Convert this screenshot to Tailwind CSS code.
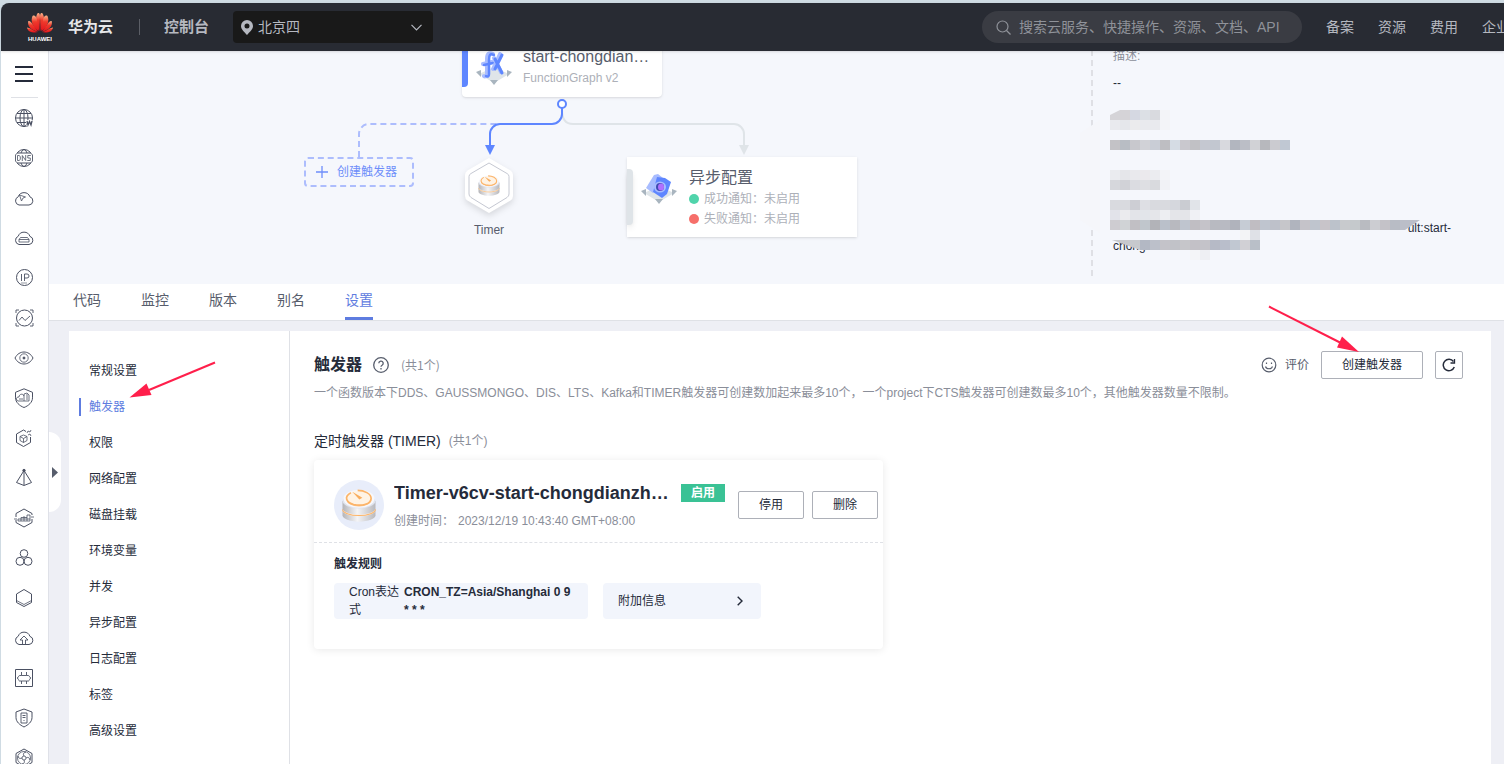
<!DOCTYPE html>
<html lang="zh-CN">
<head>
<meta charset="utf-8">
<title>函数工作流 - 触发器</title>
<script src="https://cdn.jsdelivr.net/npm/@tailwindcss/browser@4"></script>
</head>
<body class="flex h-screen flex-col overflow-hidden bg-[#cfdbe3] pt-[3px] pl-px font-['Liberation_Sans','Noto_Sans_CJK_SC',sans-serif] text-xs text-[#252b3a]">

<svg class="absolute h-0 w-0" aria-hidden="true">
  <defs>
    <linearGradient id="metal" x1="0" x2="1"><stop offset="0" stop-color="#b4b4b8"/><stop offset=".45" stop-color="#f4f4f6"/><stop offset="1" stop-color="#b9b9bd"/></linearGradient>
    <linearGradient id="petal" x1="0" y1="0" x2="0" y2="1"><stop offset="0" stop-color="#fbb48b"/><stop offset=".4" stop-color="#ee3a2c"/><stop offset="1" stop-color="#e3131c"/></linearGradient>
    <symbol id="timer" viewBox="0 0 100 98">
      <path d="M1 62v16c0 10 22 19 49 19s49-9 49-19V62z" fill="url(#metal)"/>
      <ellipse cx="50" cy="62" rx="49" ry="19" fill="#f6efe8"/>
      <path d="M1 60c0 10 22 19 49 19s49-9 49-19" fill="none" stroke="#fcb468" stroke-width="3"/>
      <path d="M1 36v21c0 10 22 19 49 19s49-9 49-19V36z" fill="url(#metal)"/>
      <ellipse cx="50" cy="36" rx="49" ry="22" fill="#dfe3ee"/>
      <ellipse cx="50" cy="29" rx="46" ry="27" fill="#f7f8fc"/>
      <ellipse cx="50" cy="31" rx="37" ry="21" fill="#fcc084"/>
      <ellipse cx="50" cy="27" rx="37" ry="21" fill="#fff3e4"/>
      <path d="M26 11C4 23 12 40 34 46c26 6 51-2 52-18C86 14 66 4 46 4" fill="none" stroke="#fcb468" stroke-width="5"/>
      <path d="M30 8l30 18-9 5z" fill="#f9ad5e"/>
    </symbol>
    <symbol id="base" viewBox="0 0 40 20">
      <path d="M20 1l15 7-15 9L5 8z" fill="#dfe5e9"/>
      <path d="M2 6l5-2v7z M38 6l-5-2v7z M16 14h8l-4 5z" fill="#a9b5bf"/>
    </symbol>
  </defs>
</svg>

<header class="z-20 flex h-12 shrink-0 items-center rounded-tl-lg bg-[#282b33] pl-[25px] text-[#b5b8c0] shadow-sm">
  <a href="#" class="flex items-center gap-[14px]">
    <svg class="h-[30px] w-7" viewBox="0 0 28 30" aria-label="HUAWEI" role="img">
      <g fill="url(#petal)">
        <path d="M13.400 19C9 14 9 4 11.800 1c1.600-.6 2.200 1 2.200 4z"/>
        <path d="M14.600 19C19 14 19 4 16.200 1c-1.600-.6-2.200 1-2.200 4z"/>
        <path d="M12.600 19.300C6 15 4.500 8 6.500 4c2-1.500 4 1 4.500 4z"/>
        <path d="M15.400 19.300C22 15 23.500 8 21.500 4c-2-1.500-4 1-4.500 4z"/>
        <path d="M11.900 19.800C5 18 1 14 2.300 9c1.500-.5 3 1 4.500 3.500z"/>
        <path d="M16.100 19.800C23 18 27 14 25.700 9c-1.500-.5-3 1-4.500 3.500z"/>
        <path d="M11.500 20.300C5 21 1.500 19 1 15.400c2 .3 6.500 2.600 10.500 4.900z"/>
        <path d="M16.500 20.300C23 21 26.500 19 27 15.400c-2 .3-6.500 2.600-10.500 4.900z"/>
      </g>
      <text x="14" y="29" text-anchor="middle" font-family="Liberation Sans" font-weight="700" font-size="6" fill="#fff">HUAWEI</text>
    </svg>
    <span class="text-[15px] font-bold text-[#e6e7ea]">华为云</span>
  </a>
  <span class="ml-[26px] h-4 w-px bg-[#5b5e66]"></span>
  <a href="#" class="ml-6 text-[15px] font-bold">控制台</a>
  <div class="relative ml-6 h-8 w-[200px]">
    <select aria-label="区域" class="h-8 w-full appearance-none rounded bg-[#191919] pl-[25px] text-sm text-[#b5b8c0]"><option>北京四</option></select>
    <svg class="pointer-events-none absolute top-[9px] left-2 h-[15px] w-3" viewBox="0 0 12 15"><path fill="#b5b8c0" fill-rule="evenodd" d="M6 0a6 6 0 0 1 6 6c0 3.500-3.500 6-6 9-2.500-3-6-5.500-6-9a6 6 0 0 1 6-6zm0 3.500a2.500 2.500 0 1 0 0 5 2.500 2.500 0 0 0 0-5z"/></svg>
    <svg class="pointer-events-none absolute top-[13px] right-[11px] h-[7px] w-[11px]" viewBox="0 0 11 7" fill="none" stroke="#b5b8c0" stroke-width="1.200"><path d="M.5.800l5 5 5-5"/></svg>
  </div>
  <div class="flex-1"></div>
  <label class="flex h-8 w-80 shrink-0 items-center gap-2 rounded-full bg-[#3a3c43] pl-[14px]">
    <svg class="h-[15px] w-[15px]" viewBox="0 0 15 15" fill="none" stroke="#8f9299" stroke-width="1.200"><circle cx="6.500" cy="6.500" r="5.500"/><path d="M10.500 10.500l4 4"/></svg>
    <input type="search" aria-label="搜索" placeholder="搜索云服务、快捷操作、资源、文档、API" class="min-w-0 flex-1 bg-transparent text-sm placeholder:text-[#8f9299] focus:outline-none">
  </label>
  <nav class="ml-6 flex w-[178px] shrink-0 gap-6 overflow-hidden text-sm whitespace-nowrap">
    <a href="#">备案</a><a href="#">资源</a><a href="#">费用</a><a href="#">企业</a>
  </nav>
</header>

<div class="flex min-h-0 flex-1">
  <nav class="flex w-12 shrink-0 flex-col items-center overflow-hidden border-r border-[#dfe1e8] bg-white pr-px" aria-label="服务列表">
    <button aria-label="菜单" class="flex h-[46px] w-full shrink-0 items-center justify-center"><svg class="h-4 w-[18px]" viewBox="0 0 18 16" fill="#252b3a"><path d="M0 0h18v2H0zM0 7h18v2H0zM0 14h18v2H0z"/></svg></button>
    <div class="h-px w-[27px] shrink-0 bg-[#dfe1e6]"></div>
    <div class="flex shrink-0 flex-col text-[#4a5062] [&_a]:flex [&_a]:h-10 [&_a]:items-center [&_a]:justify-center [&_svg]:h-5 [&_svg]:w-5 [&_svg]:fill-none [&_svg]:stroke-current">
      <a href="#" aria-label="Web"><svg viewBox="0 0 20 20"><circle cx="10" cy="10" r="8.500"/><ellipse cx="10" cy="10" rx="4" ry="8.500"/><path d="M10 1.500v17M1.500 10h17M3 5.500h14M3 14.500h9"/><path d="M12.500 12h6v6h-6z" fill="#fff" stroke="none"/><path d="M13 13l1 4 1.500-3.500L17 17l1-4" stroke-width="1.300"/></svg></a>
      <a href="#" aria-label="域名解析"><svg viewBox="0 0 20 20"><circle cx="10" cy="10" r="8.500"/><path d="M3.500 5h13M3.500 15h13M7 5c.5-1.500 1.500-3 3-3.500 1.500.5 2.500 2 3 3.500M7 15c.5 1.500 1.500 3 3 3.500 1.500-.5 2.500-2 3-3.500"/><path d="M1.500 6.500h17v7h-17z" fill="#fff" stroke="none"/><path d="M1.500 6.500v7M18.500 6.500v7" stroke-width=".8"/><path d="M3.500 7.500v5H5l1.300-1v-3L5 7.500zM8.300 13V7.500l3.400 5V7M16.800 7.500h-3v2.500h2.500v2.500h-3" stroke-width=".8"/></svg></a>
      <a href="#" aria-label="云服务"><svg viewBox="0 0 20 20"><path d="M5 17a4.300 4.300 0 0 1-.8-8.200A6.200 6.200 0 0 1 15.900 8.800 4.200 4.200 0 0 1 15 17z"/><path d="M5.500 7l6 2-2.500 1-1.500 3z" stroke-width=".8"/></svg></a>
      <a href="#" aria-label="云硬盘"><svg viewBox="0 0 20 20"><path d="M5 16.500a4.300 4.300 0 0 1-.8-8.200A6.200 6.200 0 0 1 15.900 8.300 4.200 4.200 0 0 1 15 16.500z"/><path d="M6.500 9.500h7l1.500 2v2.500H5v-2.500zM5 11.500h10" stroke-width=".8"/></svg></a>
      <a href="#" aria-label="弹性公网IP"><svg viewBox="0 0 20 20"><circle cx="10.500" cy="9.500" r="8"/><path d="M7.500 6v7M10.500 13V6h2.500a1.500 1.500 0 0 1 0 4h-2.500" stroke-width=".9"/><path d="M7 15h6" stroke-width=".6"/></svg></a>
      <a href="#" aria-label="云监控"><svg viewBox="0 0 20 20"><circle cx="10.500" cy="10" r="8"/><path d="M5 12.500L8 9l3 3.500L16 8M2 5V2h3M16 2h3v3M2 15v3h3M16 18h3v-3" stroke-width=".9"/></svg></a>
      <a href="#" aria-label="应用监控"><svg viewBox="0 0 20 20"><path d="M1 10c4-8 14-8 18 0-4 8-14 8-18 0z"/><circle cx="10" cy="10" r="4.200" stroke-width=".8"/><circle cx="10" cy="10" r="1" fill="currentColor"/></svg></a>
      <a href="#" aria-label="安全"><svg viewBox="0 0 20 20"><path d="M10 .8l8.500 3.500v5.500c0 4.500-4 8-8.500 9.700-4.500-1.700-8.500-5.200-8.500-9.700V4.300z"/><path d="M4 13a2 2 0 0 1 1-4c0-3 4-4 5-1V6l3-1 2 2v6zM10 8v5M12 7h2M12 9h2M12 11h2M5 11h4" stroke-width=".8"/></svg></a>
      <a href="#" aria-label="容器"><svg viewBox="0 0 20 20"><path d="M12 3.500L9.500 2 2.500 6v8.500l7 4 7-4V9"/><path d="M6 8.500l3.500-1.500L13 8.500v4L9.500 14.500 6 12.500zM6 8.500l3.500 2 3.500-2M9.500 10.500v4M13 5l1-2 2 1 1-2M14 7l2-1 1 2" stroke-width=".8"/></svg></a>
      <a href="#" aria-label="对象存储"><svg viewBox="0 0 20 20"><path d="M10 2.500L2.500 14.500l7.500 3 7.500-3z"/><path d="M10 3v14"/><circle cx="10" cy="2.500" r="1.200" fill="currentColor"/></svg></a>
      <a href="#" aria-label="数据分析"><svg viewBox="0 0 20 20"><path d="M2 9V5.500L10 1l8 4.500V7M18 11v3.500L10 19l-8-4.500V12"/><path d="M4 13h12V7h-3v6M13 9.500h-3V13M10 8v1.500H7V13M4 13v-2h12M0 11h3M17 9h3" stroke-width=".8"/></svg></a>
      <a href="#" aria-label="集群"><svg viewBox="0 0 20 20"><circle cx="10" cy="5.500" r="3.800"/><circle cx="6" cy="13.300" r="4"/><circle cx="14" cy="13.300" r="4"/></svg></a>
      <a href="#" aria-label="云引擎"><svg viewBox="0 0 20 20"><path d="M10 1.500l7.500 4.500v8.500L10 18.500l-7.500-4V6z"/><path d="M2.500 12.500l7.500 4 7.500-4" stroke-width=".8"/></svg></a>
      <a href="#" aria-label="上传"><svg viewBox="0 0 20 20"><path d="M5 16.500a4.300 4.300 0 0 1-.8-8.200A6.200 6.200 0 0 1 15.900 8.300 4.200 4.200 0 0 1 15 16.500z"/><path d="M8.500 16V12H6l4-4 4 4h-2.500v4" stroke-width=".9"/></svg></a>
      <a href="#" aria-label="网关"><svg viewBox="0 0 20 20"><path d="M1.500 1.500h17v17h-17z"/><path d="M7.500 4v3.500H5.500c-1 0-1 2.500-2.500 2.500 1.500 0 1.500 3 2.500 3h2V16M12.500 4v3.500h2c1 0 1 2.500 2.500 2.500-1.500 0-1.500 3-2.500 3h-2V16M7.500 7.500h5M7.500 13h5" stroke-width=".9"/></svg></a>
      <a href="#" aria-label="主机安全"><svg viewBox="0 0 20 20"><path d="M10 1l8 3v5.500c0 4.500-4 7.500-8 9.500-4-2-8-5-8-9.500V4z"/><path d="M7 5h6v10H7zM8.500 7.500h3M8.500 9.500h3M9.500 12.500h1" stroke-width=".9"/></svg></a>
      <a href="#" aria-label="函数工作流"><svg viewBox="0 0 20 20"><path d="M10 1l8 4.500v9L10 19l-8-4.500v-9z"/><circle cx="10" cy="10" r="6.500" stroke-width=".8"/><circle cx="10" cy="10" r="2" stroke-width=".8"/><path d="M10 8c-1-2-1-3 2-4M12 10c2-1 3-1 4 2M10 12c1 2 0 4-2 4M8 10c-2 1-4 0-4-2" stroke-width=".9"/></svg></a>
    </div>
  </nav>

  <main class="relative flex min-w-0 flex-1 flex-col bg-[#eeeff5]">
    <button aria-label="展开" class="absolute top-[381px] left-0 z-10 flex h-20 w-3 items-center rounded-r-xl bg-white pl-[3px]"><svg class="h-[11px] w-1.5" viewBox="0 0 6 11"><path d="M0 0l6 5.500L0 11z" fill="#575d6c"/></svg></button>

    <section class="flex h-[233px] shrink-0 overflow-hidden bg-[#f5f7fc]">
      <!-- Flow diagram canvas -->
      <div class="relative min-w-0 flex-1">
        <svg class="absolute top-0 left-0 h-[233px] w-[860px]" viewBox="49 51 860 233" fill="none" stroke-width="2">
          <path d="M359 157V134a10 10 0 0 1 10-10H500" stroke="#adbdfd" stroke-dasharray="6 4"/>
          <path d="M562 110c0 9 3 14 11 14H734a10 10 0 0 1 10 10V146" stroke="#dfe4e8"/>
          <path d="M739 145h10l-5 10z" fill="#dfe4e8"/>
          <path d="M562 108v6a10 10 0 0 1-10 10H500a10 10 0 0 0-10 10V146" stroke="#5e86ff"/>
          <path d="M485 145h10l-5 10z" fill="#5e86ff"/>
          <circle cx="562" cy="104" r="4" fill="#fff" stroke="#5e86ff"/>
        </svg>
        <article class="absolute -top-[34px] left-[413px] h-20 w-[200px] rounded bg-white shadow">
          <span class="absolute bottom-[10px] left-0 h-14 w-1.5 rounded-r bg-[#5e86ff]"></span>
          <svg class="absolute bottom-2 left-[12px] h-10 w-10" viewBox="0 0 40 40">
            <use href="#base" x="0" y="17" width="40" height="20"/>
            <g fill="none" stroke-linecap="round"><path d="M19 5c-4-2-6 0-6 5v15c0 2-2 3-3 2M9 15l9-2" stroke="#a8bcff" stroke-width="4"/><path d="M20 6c-4-2-5 0-5 5v14c0 2-1 3-3 2M10 16l9-2" stroke="#5e86ff" stroke-width="2.500"/><path d="M20 9l7 14M26 5l-7 15" stroke="#a8bcff" stroke-width="4"/><path d="M21 10l7 14M28 6l-7 14" stroke="#5e86ff" stroke-width="3"/></g>
          </svg>
          <div class="flex flex-col gap-px pt-[29px] pl-[61px]">
            <h2 class="w-32 truncate text-base leading-[22px] text-[#575d6c]">start-chongdianzhuang</h2>
            <p class="leading-[18px] text-[#adb0b8]">FunctionGraph v2</p>
          </div>
        </article>
        <button class="absolute top-[106px] left-[255px] flex h-[30px] w-[110px] items-center gap-[9px] rounded border-2 border-dashed border-[#adbdfd] pl-[10px] text-[#6e8efa]"><svg class="h-3 w-3" viewBox="0 0 12 12" stroke="currentColor" stroke-width="1.300"><path d="M6 0v12M0 6h12"/></svg>创建触发器</button>
        <div class="absolute top-[107px] left-[410px] flex w-[60px] flex-col items-center">
          <svg class="h-[60px] w-[60px] drop-shadow-md" viewBox="-6 0 60 60">
            <path d="M24 0l21.500 12.500Q48 14 48 17v21q0 3-2.500 4.500L24 55 2.500 42.500Q0 41 0 38V17q0-3 2.500-4.500z" fill="#fff"/>
            <path d="M24 5l18 10.500q2 1 2 3V36q0 2-2 3.500L24 50.500 6 39.500Q4 38 4 36V18.500q0-2 2-3z" fill="none" stroke="#c5c8d2"/>
            <use href="#timer" x="13" y="17" width="22" height="21"/>
          </svg>
          <span class="mt-[3px] leading-[18px] text-[#575d6c]">Timer</span>
        </div>
        <article class="absolute top-[106px] left-[578px] flex h-20 w-[230px] bg-white shadow">
          <span class="mt-3 h-14 w-1.5 rounded-r bg-[#dfe4e8] shadow-md"></span>
          <svg class="mt-[14px] ml-[6px] h-10 w-10" viewBox="0 0 40 40">
            <use href="#base" x="0" y="14" width="40" height="20"/>
            <path d="M15 4l4-1 5 4-10 15-7-5z" fill="#a8bcff"/><path d="M18 6l8 1 6 4-4 12-5 4-9-6z" fill="#5e86ff"/>
            <ellipse cx="21" cy="16" rx="6" ry="5.500" fill="#a8bcff"/><ellipse cx="21" cy="16" rx="4" ry="4" fill="#3f4bb0"/><ellipse cx="22" cy="16" rx="3" ry="3.500" fill="#b070ff"/>
          </svg>
          <div class="ml-[10px] pt-[9px] text-[#adb0b8]">
            <h2 class="text-base leading-[23px] text-[#575d6c]">异步配置</h2>
            <p class="flex h-5 items-center gap-[5px]"><span class="h-[10px] w-[10px] rounded-full bg-[#50d4ab]"></span>成功通知：未启用</p>
            <p class="flex h-5 items-center gap-[5px]"><span class="h-[10px] w-[10px] rounded-full bg-[#f66f6a]"></span>失败通知：未启用</p>
          </div>
        </article>
      </div>

      <!-- Function details; sensitive values are pixelated -->
      <aside class="relative w-[424px] shrink-0">
        <dl class="-mt-1 pl-[33px] leading-[18px]">
          <dt class="text-[#8a8e99]">描述:</dt>
          <dd class="mt-[9px]">--</dd>
          <dd class="mt-[127px] w-[338px] text-right">ult:start-</dd>
          <dd>chong</dd>
        </dl>
        <svg class="absolute top-0 left-0 h-[233px] w-[424px]" viewBox="1080 51 424 233">
          <path d="M1092 50V276" stroke="#dfe0e5" stroke-width="2" stroke-dasharray="6 4"/>
          <path d="M1080 133l20-13v113l-20-13z" fill="#f5f6fa"/>
          <g id="mosaic" shape-rendering="crispEdges"></g>
          <path d="M1110 110h10l-10 5z" fill="#f5f7fc"/>
          <path d="M1400 220h20l-15 10h-5z" fill="#bbbec8"/>
          <path d="M1112 240h28v10z" fill="#c7c9cd"/>
        </svg>
      </aside>
    </section>

    <nav class="flex h-[37px] shrink-0 gap-10 border-b border-[#dfe1e6] bg-white pl-6 text-sm text-[#575d6c]" aria-label="函数页签">
      <a href="#" class="pt-1.5">代码</a><a href="#" class="pt-1.5">监控</a><a href="#" class="pt-1.5">版本</a><a href="#" class="pt-1.5">别名</a>
      <a href="#" class="border-b-3 border-[#5e7ce0] pt-1.5 text-[#5e7ce0]" aria-current="page">设置</a>
    </nav>

    <section class="mt-[10px] mr-[13px] ml-5 flex min-h-0 flex-1 bg-white">
      <nav class="relative w-[221px] shrink-0 border-r border-[#dfe1e6] pt-[21px] pl-[10px] [&_a]:flex [&_a]:h-9 [&_a]:items-center [&_a]:pt-px [&_a]:pl-[10px]" aria-label="设置">
        <a href="#">常规设置</a>
        <a href="#" class="relative text-[#5e7ce0] before:absolute before:left-0 before:h-[18px] before:w-0.5 before:bg-[#5e7ce0]" aria-current="page">触发器</a>
        <a href="#">权限</a><a href="#">网络配置</a><a href="#">磁盘挂载</a><a href="#">环境变量</a><a href="#">并发</a><a href="#">异步配置</a><a href="#">日志配置</a><a href="#">标签</a><a href="#">高级设置</a>
        <svg class="pointer-events-none absolute top-[29px] left-[60px] h-10 w-[90px]" viewBox="129 360 90 40"><path d="M215 362.500L149 390" stroke="#ff1f4b" stroke-width="2"/><path d="M129.500 397.500l17-14 5 11.500z" fill="#ff1f4b"/></svg>
      </nav>

      <div class="min-w-0 flex-1 pt-5 pr-7 pl-6">
        <div class="flex h-7 items-center">
          <h1 class="text-base font-bold">触发器</h1>
          <svg class="ml-[11px] h-4 w-4" viewBox="0 0 16 16" fill="none" stroke="#575d6c" stroke-width="1.300"><circle cx="8" cy="8" r="7.300"/><path d="M5.800 6.300a2.200 2.200 0 1 1 3.300 1.900c-.8.500-1.100.8-1.100 1.600"/><path d="M8 11v1.500"/></svg>
          <span class="ml-3 font-['Noto_Sans_CJK_SC',sans-serif] text-[#8a8e99]">(共1个)</span>
          <div class="relative ml-auto flex items-center gap-3">
            <button class="flex items-center gap-2 text-[#575d6c]"><svg class="h-4 w-4" viewBox="0 0 16 16" fill="none" stroke="#575d6c" stroke-width="1.200"><circle cx="8" cy="8" r="6.800"/><path d="M4.500 9.500c1 3 6 3 7 0"/><path d="M5.500 5.500v1.500M10.500 5.500v1.500"/></svg>评价</button>
            <button class="h-7 w-[102px] rounded-xs border border-[#adb0b8]">创建触发器</button>
            <button aria-label="刷新" class="flex h-7 w-7 items-center justify-center rounded-xs border border-[#adb0b8]"><svg class="h-[14px] w-[14px]" viewBox="0 0 14 14" fill="none" stroke="#252b3a" stroke-width="1.500"><path d="M12.300 9A5.700 5.700 0 1 1 11.500 3.500"/><path d="M12.500 1v4h-4" stroke-width="1.300"/></svg></button>
            <svg class="pointer-events-none absolute -top-[47px] right-[102px] h-12 w-24" viewBox="1265 304 96 48"><path d="M1269 306.500L1340 342.500" stroke="#ff1f4b" stroke-width="2"/><path d="M1359 352l-17-15.500-5 11z" fill="#ff1f4b"/></svg>
          </div>
        </div>
        <p class="mt-[5px] leading-[18px] text-[#8a8e99]">一个函数版本下DDS、GAUSSMONGO、DIS、LTS、Kafka和TIMER触发器可创建数加起来最多10个，一个project下CTS触发器可创建数最多10个，其他触发器数量不限制。</p>
        <h2 class="mt-7 flex items-center gap-2 text-sm leading-[22px]">定时触发器 (TIMER)<span class="text-xs text-[#8a8e99]">(共1个)</span></h2>

        <article class="mt-2 h-[189px] w-[569px] rounded bg-white shadow-[0_1px_8px_rgba(0,0,0,0.09)]">
          <header class="flex h-[83px] border-b border-dashed border-[#dfe1e6] pt-5 pr-[5px] pl-5">
            <span class="flex h-[50px] w-[50px] shrink-0 items-center justify-center rounded-full bg-[#e8edfa]"><svg class="h-[33px] w-[34px]"><use href="#timer"/></svg></span>
            <div class="ml-[10px] min-w-0 flex-1">
              <div class="flex items-center gap-3">
                <h3 class="w-[275px] truncate text-lg leading-[26px] font-bold">Timer-v6cv-start-chongdianzhuang</h3>
                <span class="flex h-[18px] w-11 items-center justify-center bg-[#3ac295] font-bold text-white">启用</span>
              </div>
              <p class="mt-1.5 leading-[18px] text-[#8a8e99]">创建时间：<span class="ml-1">2023/12/19 10:43:40 GMT+08:00</span></p>
            </div>
            <div class="mt-[11px] flex gap-2">
              <button class="h-7 w-[66px] rounded-xs border border-[#adb0b8]">停用</button>
              <button class="h-7 w-[66px] rounded-xs border border-[#adb0b8]">删除</button>
            </div>
          </header>
          <div class="px-5 pt-3">
            <h4 class="leading-[18px] font-bold">触发规则</h4>
            <div class="mt-[10px] flex gap-[15px]">
              <div class="flex h-9 w-[254px] gap-1 rounded bg-[#f2f5fc] pl-[15px] leading-[18px]"><span class="w-[51px] shrink-0">Cron表达式</span><b>CRON_TZ=Asia/Shanghai 0 9<br>* * *</b></div>
              <button class="flex h-9 w-[158px] items-center justify-between rounded bg-[#f2f5fc] pr-[18px] pl-[15px]">附加信息<svg class="h-[10px] w-1.5" viewBox="0 0 6 10" fill="none" stroke="#252b3a" stroke-width="1.400"><path d="M.7.700L5 5 .7 9.300"/></svg></button>
            </div>
          </div>
        </article>
      </div>
    </section>
  </main>
</div>

<script>
  // Each row: y, start x, then one colour per 10px cell.
  const rows = [
    [110, 1110, 'd5d4d8 d5d3d7 d5d8e2 dce0e5 d9dadf f3f4f8'],
    [120, 1110, 'e9eaee e5e7eb ebebed e9eaee e9eaee f3f4f8'],
    [140, 1110, 'c3c2c6 b8bdc4 c8c8cd d1d2d7 c9cdd6 bebec2 d5dce4 c9c8ce c1c1c5 c5c8d1 c2c7d0 d8d9de b2b6bf bbbec6 d1d2d6 b7b8bd cbcbd0 c0c8d3'],
    [170, 1110, 'eaebef e5e6ea e9e9ed ebe9ed ebecf0 f3f4f8'],
    [180, 1110, 'd6d7dc d1d2d7 dbdce1 dedfe3 d9dade f1f2f6'],
    [200, 1110, 'd9dadf d9dadf cdced4 dedfe4 d9dadf d9dadf d5d7dd caccd2 e1e4e9'],
    [210, 1110, 'e2e3ea ebebee e3e4e9 e2e5ea e5e6ea edeef2 e4e5e9 e4e5e9 f0f1f5'],
    [220, 1110, 'ceccd1 d0d3d6 c1bfc4 c0c6cc b2b3b8 bac0ca b8b9bf bfc5cf c0bec3 c5c3c9 b8bac1 b8bac2 b0b3bc c6ccd5 c0bdc2 bfc5cf bec1ca c6c6ca b0b4be c5c3c9 bfc5ce c8c4c9 bcc2cb c8cacd c5c9cc b9bbc1 cccdd2 c4c2c8 b8bcc5'],
    [230, 1240, 'f3f4f6 dfe1e7'],
    [240, 1140, 'b3b8c4 bcc0ca c4c3c9 c1c2c8 c6c6ca c3c1c7 c4c3c9 b6bac6 b9becb c1c8d2 d1d0d5 b9bfc8'],
    [250, 1190, 'f4f5f8 eeeff3']
  ];
  const g = document.getElementById('mosaic');
  for (const [y, x0, cells] of rows) {
    cells.split(' ').forEach((c, i) => {
      const r = document.createElementNS('http://www.w3.org/2000/svg', 'rect');
      r.setAttribute('x', x0 + i * 10); r.setAttribute('y', y);
      r.setAttribute('width', 10); r.setAttribute('height', 10);
      r.setAttribute('fill', '#' + c);
      g.appendChild(r);
    });
  }
</script>
</body>
</html>
